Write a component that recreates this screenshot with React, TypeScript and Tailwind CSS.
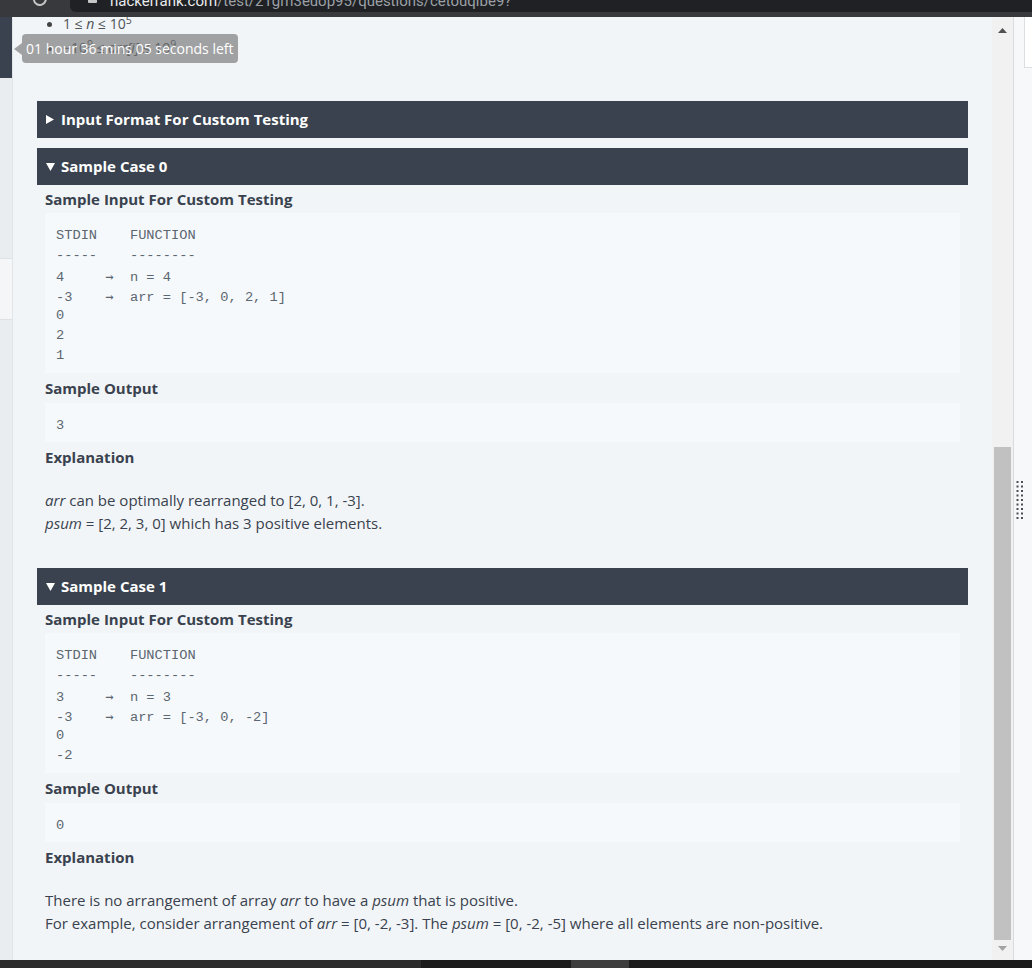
import React from "react";

const headerBg = "bg-[#39424e]";

const TriRight = () => (
  <svg width="8" height="9" viewBox="0 0 8 9">
    <polygon points="0,0 8,4.5 0,9" fill="#ffffff" />
  </svg>
);

const TriDown = () => (
  <svg width="9" height="8" viewBox="0 0 9 8">
    <polygon points="0,0 9,0 4.5,8" fill="#ffffff" />
  </svg>
);

const Header = ({ open, title }: { open: boolean; title: string }) => (
  <div
    className={`h-[37px] ${headerBg} flex items-center pl-[9px] text-white font-bold text-[15px]`}
  >
    {open ? <TriDown /> : <TriRight />}
    <span className={open ? "ml-[6px]" : "ml-[7px]"}>{title}</span>
  </div>
);

const Label = ({ children, h }: { children: React.ReactNode; h: string }) => (
  <div className={`${h} flex items-center text-[15px] font-bold text-[#39424e]`}>
    {children}
  </div>
);

// the arrow glyph in Liberation Mono is tiny, so swap in DejaVu's for it
const CodeLine = ({ text }: { text: string }) => {
  const parts = text.split("→");
  return (
    <div className="h-[20px]">
      {parts.map((p, i) => (
        <React.Fragment key={i}>
          {i > 0 && (
            <span className="font-['DejaVu_Sans_Mono',monospace] text-[13.6px]">→</span>
          )}
          {p}
        </React.Fragment>
      ))}
    </div>
  );
};

const CodeBlock = ({ lines }: { lines: string[] }) => (
  <div className="bg-[#f6f9fc] pt-[13px] pb-[7px] pl-[11px] font-['Liberation_Mono',monospace] text-[13.7px] leading-[20px] text-[#5b6670] whitespace-pre">
    {lines.map((l, i) => (
      <CodeLine key={i} text={l} />
    ))}
  </div>
);

const SampleCase = ({
  n,
  input,
  output,
  children,
}: {
  n: number;
  input: string[];
  output: string;
  children: React.ReactNode;
}) => (
  <div className="mb-[33px]">
    <Header open title={`Sample Case ${n}`} />
    <div className="px-[8px]">
      <Label h="h-[28px]">Sample Input For Custom Testing</Label>
      <CodeBlock lines={input} />
      <Label h="h-[30px]">Sample Output</Label>
      <div className="h-[39px] bg-[#f6f9fc] pt-[13px] pl-[11px] font-['Liberation_Mono',monospace] text-[13.7px] leading-[20px] text-[#5b6670]">
        {output}
      </div>
      <Label h="h-[30px]">Explanation</Label>
      <p className="mt-[17px] text-[15px] leading-[23px] text-[#39424e]">
        {children}
      </p>
    </div>
  </div>
);

const TopBar = () => (
  <div className="h-[17px] bg-[#38393c] flex items-start shrink-0">
    <div className="w-[70px] h-[12px] relative overflow-hidden">
      <svg className="absolute left-[32px] top-[-8px]" width="16" height="14" viewBox="0 0 16 14">
        <path d="M13 4 A6 6 0 1 1 8 1" fill="none" stroke="#c4c7c5" strokeWidth="2" />
      </svg>
    </div>
    <div className="flex-1 h-[12px] bg-[#202124] rounded-bl-[6px] overflow-hidden flex items-start">
      <div className="w-[18px] h-[3px] ml-[18px] relative">
        <div className="absolute left-0 top-0 w-[9px] h-[3px] bg-[#c4c7c5] rounded-b-[1px]" />
      </div>
      <div className="ml-[4px] -mt-[6px] whitespace-nowrap text-[15px] leading-[15px] font-['Roboto',sans-serif]">
        <span className="text-[#e8eaed]">hackerrank.com</span>
        <span className="text-[#9aa0a6]">/test/21gm3euop95/questions/cetouqibe9?</span>
      </div>
    </div>
  </div>
);

const BottomBar = () => (
  <div className="h-[8px] flex shrink-0">
    <div className="w-[421px] bg-[#2b2b2b]" />
    <div className="w-[150px] bg-[#1b1b1b]" />
    <div className="w-[58px] bg-[#3d3d3d]" />
    <div className="flex-1 bg-[#1b1b1b]" />
  </div>
);

const LeftStrip = () => (
  <div className="w-[13px] shrink-0 bg-[#eaedef] border-r border-[#e1e5e8] flex flex-col">
    <div className="h-[61px] bg-[#39424e]" />
    <div className="h-[180px]" />
    <div className="h-[62px] bg-[#f4f6f8] border-y border-[#dde1e4]" />
  </div>
);

const Scrollbar = () => (
  <div className="w-[21px] shrink-0 bg-[#f1f1f1] flex flex-col items-center">
    <div className="h-[26px] flex items-center justify-center">
      <svg width="9" height="5" viewBox="0 0 9 5">
        <polygon points="0,5 9,5 4.5,0" fill="#505050" />
      </svg>
    </div>
    <div className="h-[404px]" />
    <div className="w-[17px] h-[493px] bg-[#c1c1c1]" />
    <div className="h-[16px] flex items-center justify-center">
      <svg width="9" height="5" viewBox="0 0 9 5">
        <polygon points="0,0 9,0 4.5,5" fill="#a3a3a3" />
      </svg>
    </div>
  </div>
);

const RightStrip = () => (
  <div className="flex-1 bg-[#f7f8f9] border-l border-[#d9dcdf] relative">
    <div className="absolute right-0 top-0 w-[8px] h-[51px] border-l border-b border-[#dcdfe2] bg-white" />
    <svg className="absolute left-[2px] top-[464px]" width="8" height="38" viewBox="0 0 8 38">
      {Array.from({ length: 9 }).map((_, r) => (
        <g key={r} fill="#4a4f55">
          <rect x="0.5" y={r * 4.5} width="2" height="2" />
          <rect x="5" y={r * 4.5} width="2" height="2" />
        </g>
      ))}
    </svg>
  </div>
);

export default function App() {
  return (
    <div className="w-[1032px] h-[968px] overflow-hidden flex flex-col relative font-['Open_Sans',sans-serif]">
      <TopBar />
      <div className="flex flex-1 min-h-0">
        <LeftStrip />
        <main className="w-[979px] shrink-0 bg-[#f2f5f7] overflow-hidden px-[24px]">
          <ul className="-mt-[5px] mb-[41px] text-[14px] leading-[24px] text-[#4f5459]">
            <li className="flex items-center">
              <span className="ml-[10px] mr-[11px] w-[5px] h-[5px] rounded-full bg-[#444]" />
              <span>
                1 ≤ <i>n</i> ≤ 10<sup>5</sup>
              </span>
            </li>
            <li className="flex items-center">
              <span className="ml-[10px] mr-[11px] w-[5px] h-[5px] rounded-full bg-[#444]" />
              <span>
                −10<sup>9</sup> ≤ <i>arr[i]</i> ≤ 10<sup>9</sup>
              </span>
            </li>
          </ul>

          <div className="mb-[10px]">
            <Header open={false} title="Input Format For Custom Testing" />
          </div>

          <SampleCase
            n={0}
            input={[
              "STDIN    FUNCTION",
              "-----    --------",
              "4     →  n = 4",
              "-3    →  arr = [-3, 0, 2, 1]",
              "0",
              "2",
              "1",
            ]}
            output="3"
          >
            <i>arr</i> can be optimally rearranged to [2, 0, 1, -3].
            <br />
            <i>psum</i> = [2, 2, 3, 0] which has 3 positive elements.
          </SampleCase>

          <SampleCase
            n={1}
            input={[
              "STDIN    FUNCTION",
              "-----    --------",
              "3     →  n = 3",
              "-3    →  arr = [-3, 0, -2]",
              "0",
              "-2",
            ]}
            output="0"
          >
            There is no arrangement of array <i>arr</i> to have a <i>psum</i> that is
            positive.
            <br />
            For example, consider arrangement of <i>arr</i> = [0, -2, -3]. The{" "}
            <i>psum</i> = [0, -2, -5] where all elements are non-positive.
          </SampleCase>
        </main>
        <Scrollbar />
        <RightStrip />
      </div>
      <BottomBar />

      {/* timer tooltip */}
      <div className="absolute left-[14px] top-[34px] flex items-center">
        <div className="w-0 h-0 border-y-[6px] border-y-transparent border-r-[8px] border-r-[rgba(110,110,110,0.62)]" />
        <div className="h-[29px] px-[4px] rounded-[4px] bg-[rgba(110,110,110,0.62)] text-white text-[14px] flex items-center whitespace-nowrap">
          01 hour 36 mins 05 seconds left
        </div>
      </div>
    </div>
  );
}
